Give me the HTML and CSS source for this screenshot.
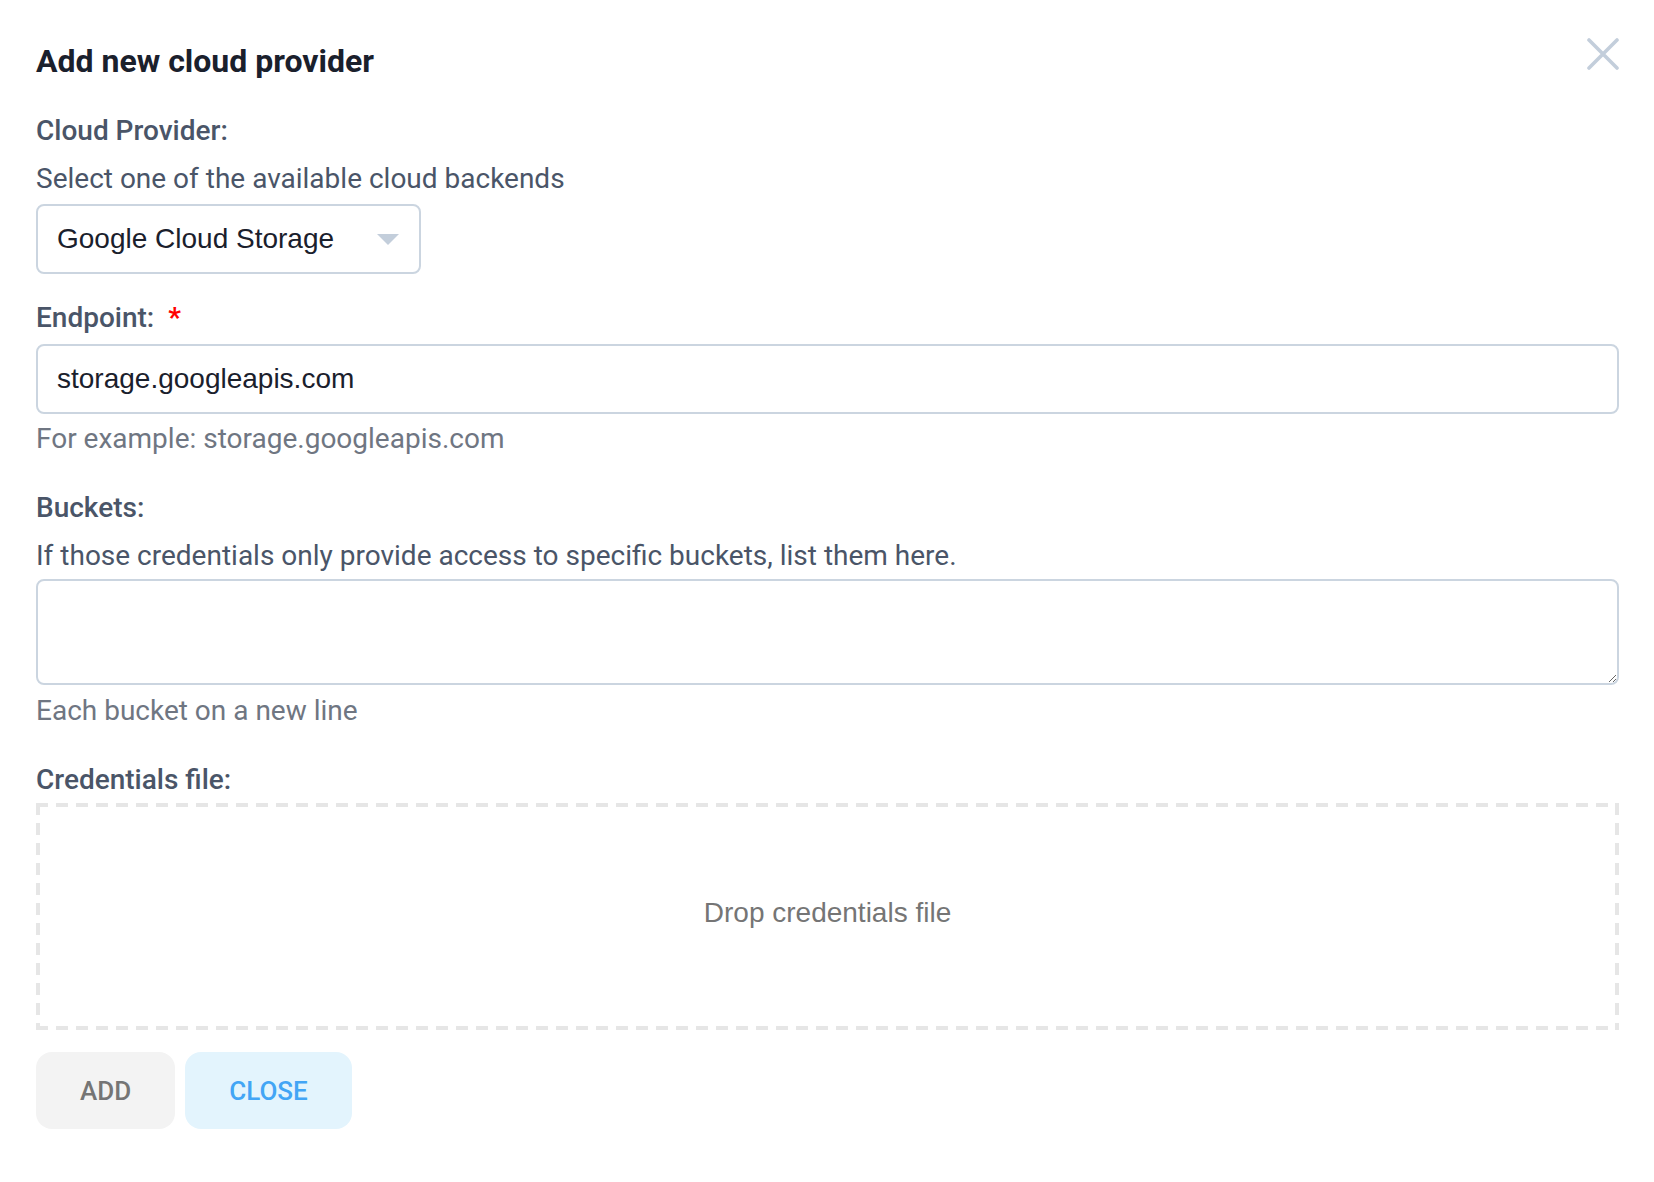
FILE: index.html
```html
<!DOCTYPE html>
<html lang="en">
<head>
<meta charset="utf-8">
<title>Add new cloud provider</title>
<link rel="stylesheet" href="styles.css">
</head>
<body>
<div class="modal">
  <div class="header">
    <h1 class="title">Add new cloud provider</h1>
    <button class="close-x" aria-label="Close">
      <svg width="32" height="32" viewBox="0 0 32 32"><path d="M2 2 L30 30 M30 2 L2 30" stroke="#c3cedb" stroke-width="3.6" stroke-linecap="round" fill="none"/></svg>
    </button>
  </div>

  <div class="label label-first">Cloud Provider:</div>
  <div class="desc">Select one of the available cloud backends</div>
  <div class="select">
    <span class="select-text">Google Cloud Storage</span>
    <svg class="caret" width="22" height="12" viewBox="0 0 22 12"><path d="M0 0 H22 L11 11 Z" fill="#c3cedb"/></svg>
  </div>

  <div class="label label-endpoint">Endpoint:<span class="req">*</span></div>
  <div class="input">storage.googleapis.com</div>
  <div class="helper">For example: storage.googleapis.com</div>

  <div class="label label-section">Buckets:</div>
  <div class="desc">If those credentials only provide access to specific buckets, list them here.</div>
  <textarea class="textarea"></textarea>
  <div class="helper helper-ta">Each bucket on a new line</div>

  <div class="label label-section">Credentials file:</div>
  <div class="dropzone">Drop credentials file</div>

  <div class="actions">
    <button class="btn btn-add">ADD</button>
    <button class="btn btn-close">CLOSE</button>
  </div>
</div>
</body>
</html>
```

FILE: styles.css
```css
html, body {
  margin: 0;
  padding: 0;
  background: #ffffff;
}

.modal {
  padding: 41px 35px 0 36px;
  font-family: Roboto, "Liberation Sans", sans-serif;
}

.header {
  display: flex;
  justify-content: space-between;
  align-items: flex-start;
  height: 40px;
}

.title {
  margin: 0;
  font-size: 32px;
  line-height: 40px;
  font-weight: 700;
  color: #1a202c;
}

.close-x {
  width: 32px;
  height: 32px;
  padding: 0;
  margin: -3px 0 0 0;
  border: none;
  background: transparent;
  display: block;
}

.close-x svg {
  display: block;
}

.label {
  font-size: 28px;
  line-height: 40px;
  font-weight: 500;
  color: #4a5568;
}

.label-first {
  margin-top: 30px;
}

.label-endpoint {
  margin-top: 24px;
}

.label-section {
  margin-top: 29px;
}

.req {
  color: #ff0000;
  font-weight: 700;
  margin-left: 14px;
}

.desc {
  margin-top: 8px;
  font-size: 28px;
  line-height: 40px;
  color: #4a5568;
}

.select {
  margin-top: 5px;
  width: 385px;
  height: 70px;
  box-sizing: border-box;
  border: 2px solid #cbd5e0;
  border-radius: 8px;
  display: flex;
  align-items: center;
  justify-content: space-between;
  padding: 0 20px 0 19px;
  font-family: "Liberation Sans", Arial, sans-serif;
  font-size: 28px;
  color: #1a202c;
}

.caret {
  display: block;
  margin-top: 2px;
}

.input {
  margin-top: 6px;
  height: 70px;
  box-sizing: border-box;
  border: 2px solid #cbd5e0;
  border-radius: 8px;
  display: flex;
  align-items: center;
  padding: 0 19px;
  font-family: "Liberation Sans", Arial, sans-serif;
  font-size: 28px;
  color: #1a202c;
}

.helper {
  margin-top: 5px;
  font-size: 28px;
  line-height: 40px;
  color: #6f7682;
}

.textarea {
  display: block;
  margin-top: 3px;
  width: 100%;
  height: 106px;
  box-sizing: border-box;
  border: 2px solid #cbd5e0;
  border-radius: 8px;
  padding: 10px 19px;
  font-family: "Liberation Sans", Arial, sans-serif;
  font-size: 28px;
  color: #1a202c;
  background: #ffffff;
  resize: vertical;
  outline: none;
}

.helper-ta {
  margin-top: 6px;
}

.dropzone {
  margin-top: 3px;
  height: 227px;
  box-sizing: border-box;
  background-image:
    repeating-linear-gradient(90deg, #e6e6e6 0 12px, transparent 12px 20px),
    repeating-linear-gradient(90deg, #e6e6e6 0 12px, transparent 12px 20px),
    repeating-linear-gradient(180deg, #e6e6e6 0 12px, transparent 12px 20px),
    repeating-linear-gradient(180deg, #e6e6e6 0 12px, transparent 12px 20px);
  background-size: 100% 4px, 100% 4px, 4px 100%, 4px 100%;
  background-position: left top, left bottom, left top, right top;
  background-repeat: no-repeat;
  display: flex;
  align-items: center;
  justify-content: center;
  font-family: "Liberation Sans", Arial, sans-serif;
  font-size: 28px;
  color: #757575;
  padding-bottom: 8px;
}

.actions {
  margin-top: 22px;
  display: flex;
  gap: 10px;
}

.btn {
  height: 77px;
  padding: 0 44px;
  border: none;
  border-radius: 16px;
  font-family: Roboto, "Liberation Sans", sans-serif;
  font-size: 26px;
  font-weight: 500;
  cursor: pointer;
}

.btn-add {
  background: #f3f3f3;
  color: #757575;
}

.btn-close {
  background: #e3f4fd;
  color: #42a5f5;
}
```
